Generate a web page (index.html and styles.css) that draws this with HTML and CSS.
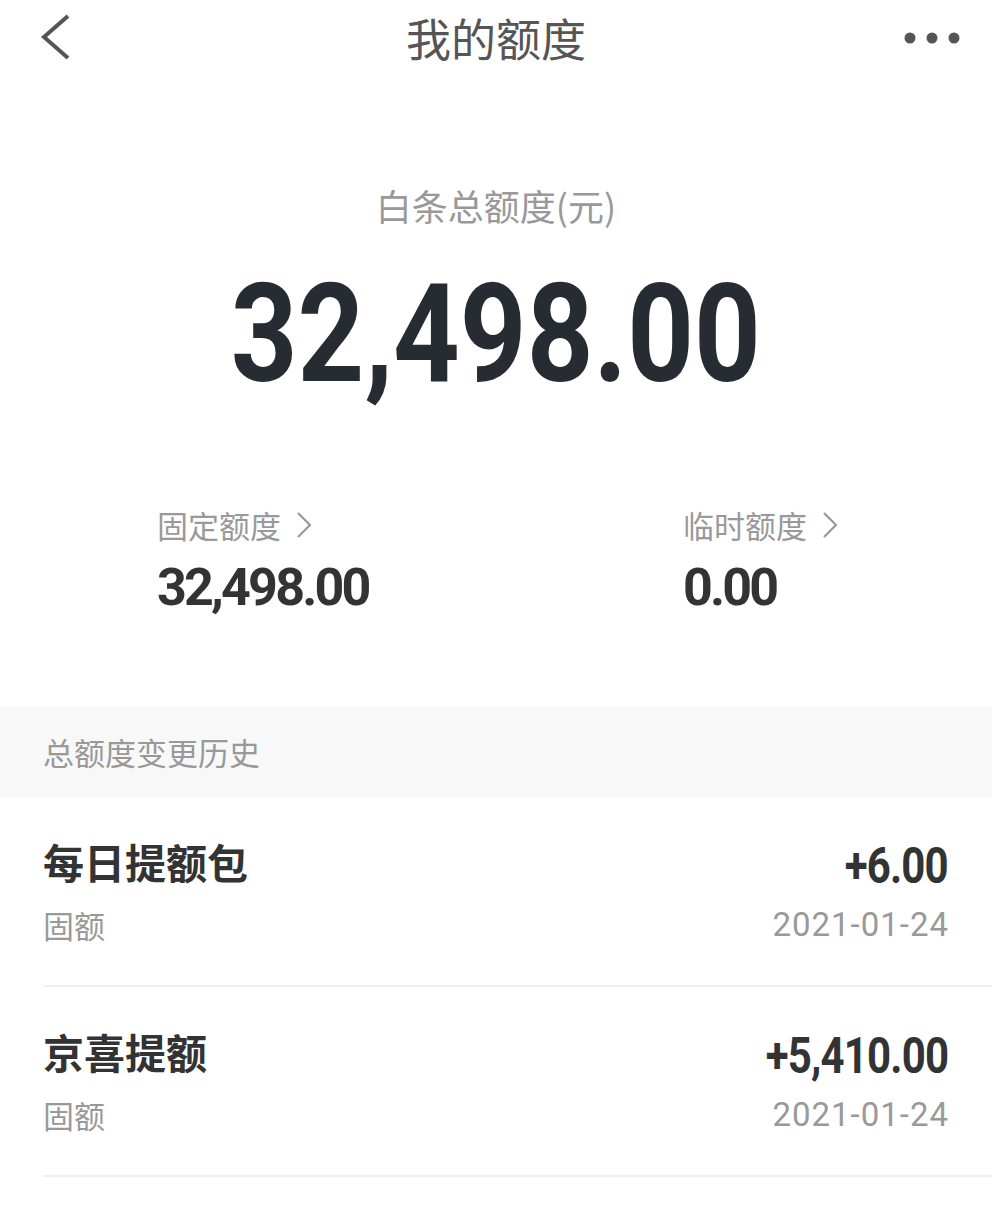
FILE: index.html
```html
<!DOCTYPE html>
<html lang="zh-CN">
<head>
<meta charset="utf-8">
<title>我的额度</title>
<link rel="stylesheet" href="styles.css">
</head>
<body>
<div class="page">
  <header class="nav">
    <span class="nav-back">
      <svg width="32" height="48" viewBox="0 0 32 48"><polyline points="28,2 4,23 28,44" fill="none" stroke="#555" stroke-width="4" stroke-linejoin="miter"/></svg>
    </span>
    <h1 class="nav-title">我的额度</h1>
    <span class="nav-more">
      <svg width="56" height="14" viewBox="0 0 56 14"><circle cx="6" cy="7" r="5.5" fill="#555"/><circle cx="28" cy="7" r="5.5" fill="#555"/><circle cx="50" cy="7" r="5.5" fill="#555"/></svg>
    </span>
  </header>

  <section class="summary">
    <div class="summary-label">白条总额度(元)</div>
    <div class="summary-value"><span class="big">32,498.00</span></div>
  </section>

  <section class="split">
    <div class="split-item">
      <div class="split-label">固定额度
        <svg class="chev" width="18" height="28" viewBox="0 0 18 28"><polyline points="3,2 15,14 3,26" fill="none" stroke="#999" stroke-width="2.2"/></svg>
      </div>
      <div class="split-value">32,498.00</div>
    </div>
    <div class="split-item">
      <div class="split-label">临时额度
        <svg class="chev" width="18" height="28" viewBox="0 0 18 28"><polyline points="3,2 15,14 3,26" fill="none" stroke="#999" stroke-width="2.2"/></svg>
      </div>
      <div class="split-value">0.00</div>
    </div>
  </section>

  <div class="section-head">总额度变更历史</div>

  <ul class="history">
    <li class="row">
      <div class="row-inner">
        <div class="row-top">
          <span class="row-title">每日提额包</span>
          <span class="row-amount">+6.00</span>
        </div>
        <div class="row-bottom">
          <span class="row-type">固额</span>
          <span class="row-date">2021-01-24</span>
        </div>
      </div>
    </li>
    <li class="row">
      <div class="row-inner">
        <div class="row-top">
          <span class="row-title">京喜提额</span>
          <span class="row-amount">+5,410.00</span>
        </div>
        <div class="row-bottom">
          <span class="row-type">固额</span>
          <span class="row-date">2021-01-24</span>
        </div>
      </div>
    </li>
  </ul>
</div>
</body>
</html>
```

FILE: styles.css
```css
* { box-sizing: border-box; }
html, body { margin: 0; padding: 0; background: #fff; }
body {
  font-family: "Noto Sans CJK SC", "Noto Sans", sans-serif;
  color: #333;
}
.page { width: 992px; }

.nav {
  height: 76px;
  display: flex;
  align-items: center;
  justify-content: space-between;
  padding: 0 32px 0 40px;
}
.nav-back { display: flex; width: 56px; }
.nav-more { display: flex; width: 56px; justify-content: flex-end; }
.nav-title {
  margin: 0 0 0 -8px;
  font-size: 45px;
  font-weight: 400;
  color: #555;
  line-height: 76px;
}

.summary {
  margin-top: 104px;
  display: flex;
  flex-direction: column;
  align-items: center;
}
.summary-label {
  font-size: 36px;
  line-height: 50px;
  color: #999;
}
.summary-value {
  margin-top: 34px;
  height: 140px;
  line-height: 140px;
  display: flex;
  justify-content: center;
}
.big {
  display: inline-block;
  font-family: Roboto, "Liberation Sans", sans-serif;
  font-weight: 700;
  font-size: 137px;
  color: #272c33;
  transform: scaleX(0.85);
}

.split {
  margin-top: 99px;
  padding-left: 157px;
  display: grid;
  grid-template-columns: 526px 1fr;
}
.split-label {
  font-size: 31px;
  line-height: 44px;
  color: #999;
  display: flex;
  align-items: center;
  gap: 14px;
}
.split-value {
  margin-top: 11px;
  font-family: Roboto, "Liberation Sans", sans-serif;
  font-weight: 700;
  font-size: 52px;
  line-height: 60px;
  letter-spacing: -2.8px;
  color: #333;
}

.section-head {
  margin-top: 88px;
  height: 91px;
  background: #f8f8f8;
  padding-left: 43px;
  display: flex;
  align-items: center;
  font-size: 31px;
  color: #999;
}

.history { list-style: none; margin: 0; padding: 0; }
.row { padding-left: 43px; }
.row-inner {
  padding: 36px 44px 39px 0;
  border-bottom: 2px solid #f0f0f0;
}
.row-top {
  display: flex;
  justify-content: space-between;
  align-items: center;
  height: 56px;
}
.row-title {
  font-size: 41px;
  font-weight: 700;
  color: #333;
  line-height: 56px;
}
.row-amount {
  display: inline-block;
  font-family: Roboto, "Liberation Sans", sans-serif;
  font-weight: 700;
  font-size: 50px;
  letter-spacing: -1px;
  color: #333;
  padding-top: 10px;
  transform: scaleX(0.84);
  transform-origin: right center;
}
.row-bottom {
  margin-top: 13px;
  display: flex;
  justify-content: space-between;
  align-items: center;
  height: 44px;
}
.row-type { font-size: 31px; color: #999; }
.row-date {
  font-family: Roboto, "Liberation Sans", sans-serif;
  font-size: 33px;
  color: #999;
  letter-spacing: 1px;
  margin-right: -1px;
}
```
